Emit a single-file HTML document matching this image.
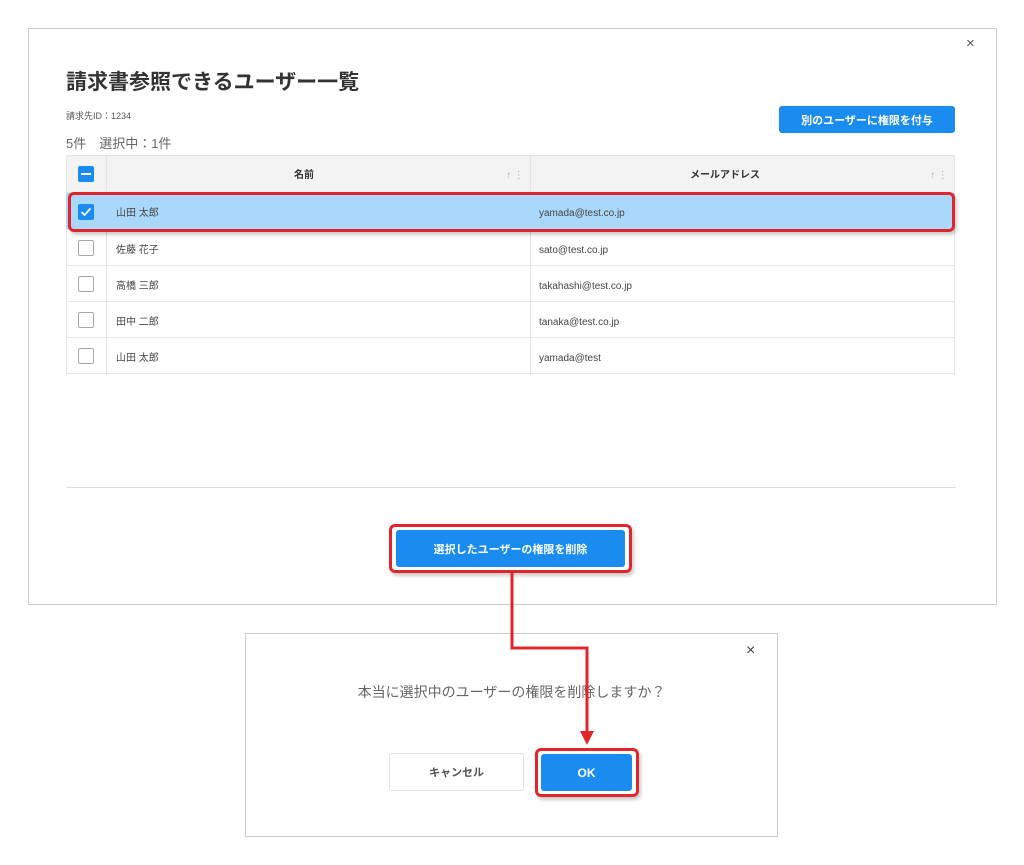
<!DOCTYPE html>
<html><head><meta charset="utf-8"><style>
*{box-sizing:border-box;margin:0;padding:0}
body{width:1024px;height:865px;background:#fff;position:relative;font-family:"Liberation Sans","Noto Sans CJK JP",sans-serif;color:#333;overflow:hidden}
.a{position:absolute}
.btn{position:absolute;background:#1a8cf0;color:#fff;font-weight:bold;font-size:11px;border-radius:3px;display:flex;align-items:center;justify-content:center}
.cb{position:absolute;width:16px;height:16px;border:1px solid #aaa;border-radius:2px;background:#fff}
.row{position:absolute;left:66px;width:889px;height:36px;border-bottom:1px solid #e6e6e6;font-size:10px;color:#444}
.row span{position:absolute;top:3px;line-height:36px;height:36px}
.h{position:absolute;top:157px;height:38px;line-height:38px;font-size:10px}
</style></head><body>
<div class="a" style="left:28px;top:28px;width:969px;height:577px;border:1px solid #c9ccd1"></div>
<div class="a" style="left:966px;top:35px;font-size:15px;color:#555">×</div>
<div class="a" style="left:66px;top:66px;font-size:21px;font-weight:bold;color:#333">請求書参照できるユーザー一覧</div>
<div class="a" style="left:66px;top:109px;font-size:9px;color:#555">請求先ID：1234</div>
<div class="a" style="left:66px;top:133px;font-size:13px;color:#666">5件　選択中：1件</div>
<div class="btn" style="left:779px;top:106px;width:176px;height:27px">別のユーザーに権限を付与</div>

<div class="a" style="left:66px;top:155px;width:889px;height:38px;background:#f3f3f3;border:1px solid #e3e3e3"></div>
<div class="a" style="left:106px;top:155px;width:1px;height:220px;background:#e3e3e3"></div>
<div class="a" style="left:530px;top:155px;width:1px;height:220px;background:#e3e3e3"></div>
<div class="a" style="left:66px;top:155px;width:1px;height:220px;background:#e8e8e8"></div>
<div class="a" style="left:954px;top:155px;width:1px;height:220px;background:#e8e8e8"></div>
<div class="a" style="left:78px;top:166px;width:16px;height:16px;background:#1a8cf0;border-radius:2px"><div class="a" style="left:3px;top:7px;width:10px;height:2px;background:#fff"></div></div>
<div class="h" style="left:294px;font-weight:bold">名前</div>
<div class="h" style="left:506px;color:#aaa">↑ ⋮</div>
<div class="h" style="left:690px;font-weight:bold">メールアドレス</div>
<div class="h" style="left:930px;color:#aaa">↑ ⋮</div>

<div class="row" style="top:193px;background:#aad8fb;height:37px"><span style="left:50px">山田 太郎</span><span style="left:473px">yamada@test.co.jp</span></div>
<div class="a" style="left:78px;top:204px;width:16px;height:16px;background:#1a8cf0;border-radius:2px"><svg width="16" height="16"><polyline points="3.5,8 6.5,11 12.5,4.5" fill="none" stroke="#fff" stroke-width="1.8"/></svg></div>
<div class="a" style="left:68px;top:192px;width:887px;height:40px;border:3px solid #e0262c;border-radius:6px;box-shadow:2px 3px 3px rgba(0,0,0,.2)"></div>

<div class="row" style="top:230px"><span style="left:50px">佐藤 花子</span><span style="left:473px">sato@test.co.jp</span></div>
<div class="row" style="top:266px"><span style="left:50px">高橋 三郎</span><span style="left:473px">takahashi@test.co.jp</span></div>
<div class="row" style="top:302px"><span style="left:50px">田中 二郎</span><span style="left:473px">tanaka@test.co.jp</span></div>
<div class="row" style="top:338px"><span style="left:50px">山田 太郎</span><span style="left:473px">yamada@test</span></div>
<div class="cb" style="left:78px;top:240px"></div>
<div class="cb" style="left:78px;top:276px"></div>
<div class="cb" style="left:78px;top:312px"></div>
<div class="cb" style="left:78px;top:348px"></div>

<div class="a" style="left:66px;top:487px;width:890px;height:1px;background:#dcdcdc"></div>
<div class="btn" style="left:396px;top:530px;width:229px;height:37px">選択したユーザーの権限を削除</div>
<div class="a" style="left:389px;top:524px;width:243px;height:49px;border:3px solid #e0262c;border-radius:6px;box-shadow:2px 3px 3px rgba(0,0,0,.2)"></div>

<div class="a" style="left:245px;top:633px;width:533px;height:204px;border:1px solid #c9ccd1;background:#fff"></div>
<div class="a" style="left:746px;top:642px;font-size:16px;color:#444">×</div>
<div class="a" style="left:245px;top:682px;width:533px;text-align:center;font-size:14px;color:#666">本当に選択中のユーザーの権限を削除しますか？</div>
<div class="a" style="left:389px;top:753px;width:135px;height:38px;border:1px solid #e0e0e0;border-radius:3px;font-size:11px;font-weight:bold;color:#555;display:flex;align-items:center;justify-content:center">キャンセル</div>
<div class="btn" style="left:541px;top:754px;width:91px;height:37px;font-size:12px">OK</div>
<div class="a" style="left:535px;top:748px;width:104px;height:49px;border:3px solid #e0262c;border-radius:6px;box-shadow:2px 3px 3px rgba(0,0,0,.2)"></div>

<svg class="a" style="left:0;top:0" width="1024" height="865"><polyline points="512,573 512,648 587,648 587,733" fill="none" stroke="#e0262c" stroke-width="3"/><polygon points="580,731 594,731 587,745" fill="#e0262c"/></svg>
</body></html>
